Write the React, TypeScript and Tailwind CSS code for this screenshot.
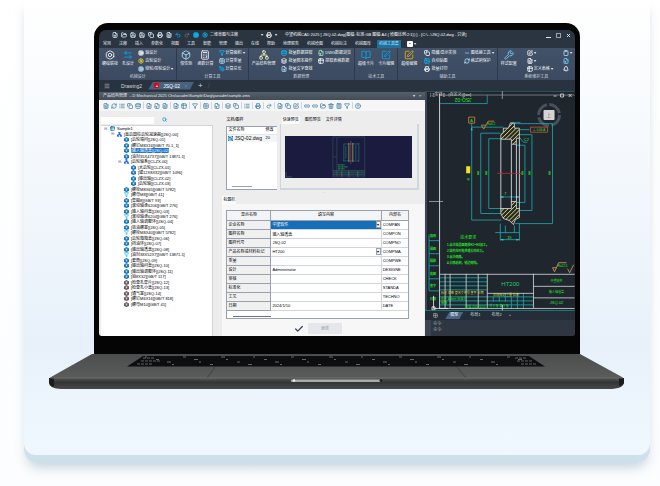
import type { ReactNode } from 'react';
import clsx from 'clsx';
import {
  ArrowLeftRight,
  Bell,
  Bolt,
  BookOpen,
  Box,
  Calculator,
  Check,
  Clipboard,
  Cog,
  Copy,
  Database,
  FileInput,
  FilePlus,
  FileSearch,
  FileText,
  Filter,
  FolderOpen,
  Grid2x2,
  HelpCircle,
  Image,
  Layers,
  Link2,
  List,
  Menu,
  Minus,
  Network,
  PenTool,
  Printer,
  Redo2,
  RefreshCw,
  Save,
  Search,
  Settings,
  SquarePen,
  Table2,
  Trash2,
  Undo2,
  Wrench,
  X,
  type LucideIcon,
} from 'lucide-react';

const menuItems = [
  '常用', '注释', '插入', '参数化', '视图', '工具', '智能', '管理', '输出', '在线', '帮助',
  '地理服务', '机械绘图', '机械标注', '机械图库', '机械工具集',
];

type Tool = { label: string; icon: LucideIcon; color?: string; more?: boolean };
type Group = { title: string; big: Tool[]; small: Tool[][] };

const groups: Group[] = [
  {
    title: '机械设计',
    big: [
      { label: '螺纹联接', icon: Bolt },
      { label: '孔设计', icon: ArrowLeftRight, color: 'text-sky-500' },
    ],
    small: [
      [
        { label: '轴设计', icon: Cog },
        { label: '齿轮设计', icon: Settings, color: 'text-yellow-300' },
        { label: '链轮/带轮设计', icon: Cog, color: 'text-sky-200', more: true },
      ],
    ],
  },
  {
    title: '计算工具',
    big: [
      { label: '惯性矩', icon: Box, color: 'text-sky-200' },
      { label: '函数计算', icon: Calculator },
    ],
    small: [
      [
        { label: '计算面积', icon: Filter, color: 'text-sky-400', more: true },
        { label: '计算重量', icon: Grid2x2, color: 'text-sky-200' },
        { label: '计算总长', icon: PenTool, color: 'text-sky-500' },
      ],
    ],
  },
  {
    title: '数据管理',
    big: [{ label: '产品结构管理', icon: Network, color: 'text-yellow-100' }],
    small: [
      [
        { label: '批量数据提取', icon: Database, color: 'text-sky-400' },
        { label: '批量脚本操作', icon: Layers },
        { label: '批量文字查找', icon: FileSearch, color: 'text-sky-200' },
      ],
      [
        { label: 'DWG数据浏览', icon: FileInput, color: 'text-emerald-200' },
        { label: '提取表格数据', icon: Table2 },
      ],
    ],
  },
  {
    title: '技术工具',
    big: [
      { label: '超级卡片', icon: BookOpen, color: 'text-sky-500' },
      { label: '卡片编辑', icon: SquarePen, color: 'text-sky-500' },
    ],
    small: [],
  },
  {
    title: '辅助工具',
    big: [{ label: '超级编辑', icon: SquarePen, color: 'text-yellow-500' }],
    small: [
      [
        { label: '隐藏/显示实体', icon: Copy },
        { label: '自动贴图', icon: Image, color: 'text-sky-400' },
        { label: '批量打印', icon: Printer },
      ],
      [
        { label: '图纸换工具', icon: Minus, color: 'text-sky-300', more: true },
        { label: '格式刷保护', icon: RefreshCw, color: 'text-sky-200' },
      ],
    ],
  },
  {
    title: '系统维护工具',
    big: [{ label: '样式配置', icon: Wrench, color: 'text-sky-300' }],
    small: [
      [
        { label: '', icon: SquarePen, more: true },
        { label: '', icon: FileText, more: true },
        { label: '定义表格', icon: Table2, more: true },
      ],
      [
        { label: '', icon: Clipboard, color: 'text-sky-200', more: true },
        { label: '', icon: FileInput, color: 'text-sky-300' },
        { label: '', icon: Bell },
      ],
    ],
  },
];

const quickIcons = [FilePlus, FolderOpen, Save, Save, Copy, Printer, FileText];

const toolbar: (LucideIcon | null)[] = [
  FileText, RefreshCw, List, Copy, Database, null, FilePlus, FileInput, FileText, null, FileSearch,
  Table2, null, Filter, null, Grid2x2, null, FileInput, null, Layers, Copy, null, List, null, Printer,
  null, Redo2, null, FileSearch, Copy, SquarePen, null, Link2, Link2, FolderOpen, Trash2, Calculator,
  Filter, null, HelpCircle,
];

// level, kind, text. a: assembly, p: part, f: fastener, m: missing part
type Kind = 'root' | 'a' | 'p' | 'f' | 'm';
const tree: [number, Kind, string][] = [
  [0, 'root', 'Sample1'],
  [1, 'a', '[直齿圆柱齿轮减速器][JSQ-00]'],
  [2, 'p', '[齿轮端闷][JSQ-01]'],
  [2, 'p', '[螺钉M8X16][GB/T 70.1_1]'],
  [2, 'p', '[输入轴透盖][JSQ-02]'],
  [2, 'p', '[油封35X47X7][GB/T 13871.1]'],
  [2, 'a', '[齿轮轴系][CLZX-00]'],
  [3, 'p', '[大齿轮][CLZX-01]'],
  [3, 'p', '[键12X8X32][GB/T 1096]'],
  [3, 'p', '[输出轴][CLZX-02]'],
  [3, 'p', '[齿轮轴][CLZX-03]'],
  [2, 'p', '[螺栓M8X65][GB/T 5782]'],
  [2, 'f', '[螺母M8][GB/T 41]'],
  [2, 'p', '[垫圈8][GB/T 93]'],
  [2, 'p', '[滚动轴承6206][GB/T 276]'],
  [2, 'p', '[输入轴闷盖][JSQ-03]'],
  [2, 'f', '[滚动轴承6204][GB/T 276]'],
  [2, 'p', '[输入轴调整环][JSQ-04]'],
  [2, 'p', '[放油螺塞][JSQ-05]'],
  [2, 'f', '[螺栓M8X40][GB/T 5782]'],
  [2, 'p', '[齿轮箱箱盖][JSQ-06]'],
  [2, 'p', '[挡油环][JSQ-07]'],
  [2, 'p', '[输出轴透盖][JSQ-08]'],
  [2, 'f', '[油封38X52X7][GB/T 13871.1]'],
  [2, 'p', '[套筒][JSQ-09]'],
  [2, 'p', '[输出轴闷盖][JSQ-10]'],
  [2, 'p', '[输出轴调整环][JSQ-11]'],
  [2, 'p', '[销8X32][GB/T 117]'],
  [2, 'm', '[检查孔垫片][JSQ-12]'],
  [2, 'm', '[检查孔小盖][JSQ-13]'],
  [2, 'm', '[通气塞][JSQ-14]'],
  [2, 'm', '[螺钉M6X16][GB/T 818]'],
  [2, 'm', '[螺母M10][GB/T 41]'],
];
const indents = ['pl-[2px]', 'pl-[9px]', 'pl-[16px]', 'pl-[23px]'];

const props: { name: string; value: string; key: string; list?: boolean }[] = [
  { name: '企业名称', value: '中望软件', key: 'COMPAN', list: true },
  { name: '图样名称', value: '输入轴透盖', key: 'COMPON' },
  { name: '图样代号', value: 'JSQ-02', key: 'COMPNO' },
  { name: '产品名称或材料标记', value: 'HT200', key: 'COMPMA', list: true },
  { name: '重量', value: '', key: 'COMPWE' },
  { name: '设计', value: 'Administrator', key: 'DESIGNE' },
  { name: '审核', value: '', key: 'CHECK' },
  { name: '标准化', value: '', key: 'STANDA' },
  { name: '工艺', value: '', key: 'TECHNO' },
  { name: '日期', value: '2024/1/10', key: 'DATE' },
];

function TitleBar() {
  return (
    <header className="flex h-[10px] items-center pl-[13px] pr-1 text-gray-100">
      <div className="flex items-center gap-[3px] text-sky-100">
        {quickIcons.map((Icon, i) => (
          <Icon key={i} className="size-[6px]" strokeWidth={3} />
        ))}
        <Undo2 className="size-[6px] text-sky-500" strokeWidth={3} />
        <Redo2 className="size-[6px] text-slate-500" strokeWidth={3} />
        <Cog className="size-[6px] text-sky-400" strokeWidth={4} />
        <Settings className="size-[6px] text-sky-400" strokeWidth={3} />
      </div>
      <span className="ml-[2px] whitespace-nowrap">二维草图与注释</span>
      <span className="ml-[23px] flex items-center gap-[3px]">
        ▾ <Printer className="size-[6px]" strokeWidth={3} /> ▾
      </span>
      <h1 className="ml-2 flex-1 whitespace-nowrap text-gray-50">
        中望机械CAD 2025 [ JSQ-02.dwg(图幅: 标准:GB 图幅:A4 ( 绘图比例:2:1)) ] - [C:\...\JSQ-02.dwg - 只读]
      </h1>
      <div className="flex items-center gap-[5px]">
        <button type="button" aria-label="最小化" className="mt-1 h-px w-[5px] bg-gray-200" />
        <button type="button" aria-label="最大化" className="size-[5px] border border-gray-400" />
        <button type="button" aria-label="关闭">
          <X className="size-[5px]" strokeWidth={4} />
        </button>
      </div>
    </header>
  );
}

function MenuBar() {
  return (
    <nav className="flex h-2 items-center gap-2 pl-1 text-gray-200">
      {menuItems.map((item, i) => (
        <button
          key={item}
          type="button"
          className={clsx(
            'whitespace-nowrap',
            i === menuItems.length - 1 && '-mx-[2px] h-2 bg-[#216f9b] px-[2px] text-sky-200',
          )}
        >
          {item}
        </button>
      ))}
      <button type="button" aria-label="更多" className="flex items-center gap-[1px]">
        <span className="flex size-[6px] items-center justify-center rounded-[1px] bg-white text-[#2b3642]">▪</span>▾
      </button>
    </nav>
  );
}

function Ribbon() {
  return (
    <div className="grid h-8 grid-cols-[78fr_71fr_106fr_43fr_99fr_77fr] bg-gradient-to-b from-[#425268] to-[#3b4a60] text-gray-100">
      {groups.map((group) => (
        <section key={group.title} className="flex min-w-0 flex-col border-r border-[#2d3a4b] last:border-r-0">
          <div className="flex flex-1 items-start justify-between px-[3px] pt-px">
            {group.big.map(({ label, icon: Icon, color }) => (
              <button key={label} type="button" className="flex flex-col items-center whitespace-nowrap pt-px">
                <Icon className={clsx('size-[10px]', color ?? 'text-white')} />
                <span className="leading-[7px]">{label}</span>
              </button>
            ))}
            {group.small.map((column, i) => (
              <div key={i} className="flex flex-col">
                {column.map(({ label, icon: Icon, color, more }, j) => (
                  <button key={j} type="button" aria-label={label || '工具'} className="flex h-2 items-center gap-[1px] whitespace-nowrap">
                    <Icon className={clsx('size-[6px] shrink-0', color ?? 'text-white')} strokeWidth={3} />
                    {label}
                    {more && <span>▾</span>}
                  </button>
                ))}
              </div>
            ))}
          </div>
          <h2 className="text-center leading-[6px] text-gray-300">{group.title}</h2>
        </section>
      ))}
    </div>
  );
}

function DocTabs() {
  return (
    <nav className="flex h-[11px] items-center bg-[#29333f] pl-[5px] text-gray-300">
      <button type="button" aria-label="菜单">
        <Menu className="size-[6px]" strokeWidth={2} />
      </button>
      <button type="button" className="ml-[11px] text-[5px]">Drawing2</button>
      <button
        type="button"
        className="ml-[6px] flex h-2 items-center gap-1 bg-[#47617f] px-[6px] text-[5px] text-white [clip-path:polygon(5px_0,100%_0,calc(100%-4px)_100%,0_100%)]"
      >
        <span className="flex size-[5px] items-center justify-center rounded-[1px] bg-red-600 text-[4px] leading-[4px]">▴</span>
        JSQ-02
        <X className="size-[4px] text-gray-400" />
      </button>
      <button type="button" aria-label="新建" className="ml-1 text-[8px] leading-[8px]">+</button>
      <span className="ml-[5px] text-[7px] text-slate-600">/</span>
    </nav>
  );
}

function TreeIcon({ kind }: { kind: Kind }) {
  if (kind === 'root') return <Table2 className="size-[5px] text-sky-700" strokeWidth={3} />;
  if (kind === 'a') return <Network className="size-[5px] text-blue-600" strokeWidth={4} />;
  if (kind === 'f') return <Filter className="size-[5px] text-sky-500" strokeWidth={3} />;
  return (
    <svg viewBox="0 0 10 10" className={clsx('size-[5px]', kind === 'p' ? 'text-[#1976b8]' : 'text-[#6b5a5c]')}>
      <path d="M5 0 10 3v5L5 10 0 8V3z" fill="currentColor" />
      <path d="M3 4h4M5 4v3" stroke="#d9f0ff" strokeWidth="1.5" />
    </svg>
  );
}

function StructureTree() {
  return (
    <div className="flex flex-col pl-[2px] pt-[6px]">
      <div className="flex h-2 items-start">
        <input aria-label="搜索" className="h-[7px] w-[53px] bg-white px-[2px] outline-none" />
        <button type="button" aria-label="查找" className="ml-2">
          <Search className="size-[5px] text-sky-600" strokeWidth={3} />
        </button>
      </div>
      <ul className="flex flex-1 flex-col border-r border-t border-gray-300 bg-white pb-[29px]">
        {tree.map(([level, kind, text], i) => (
          <li key={i} className={clsx('flex min-h-0 flex-1 items-center gap-[2px] whitespace-nowrap', indents[level])}>
            <span className="flex w-[5px] justify-center text-gray-500">{(kind === 'root' || kind === 'a') && '⊟'}</span>
            <span className="w-[5px] shrink-0"><TreeIcon kind={kind} /></span>
            <span className={clsx('leading-[5px]', i === 4 && 'bg-[#1c74cf] text-white')}>{text}</span>
          </li>
        ))}
      </ul>
    </div>
  );
}

function Preview() {
  return (
    <svg viewBox="0 0 128 42" className="w-full bg-[#1b1b3f]" fill="none" strokeWidth=".5">
      <path d="M48 1h32v40H48zM52 1v40M48 21h4" stroke="#39605c" />
      <path d="M59 8v17M61 10v13M74 7v19M71 9v15M59 8h15M58 25h16" stroke="#279b78" />
      <path d="M64 7v19M68 7v19" stroke="#a8a65c" strokeWidth=".8" />
      <path d="M66 5v23" stroke="#c55" />
      <path d="M53 29h7M53 31h10M53 33h7" stroke="#26d54a" strokeDasharray="1 .4" strokeWidth=".8" />
      <path d="M48 35h32M48 37h32M48 39h32M57 35v6M64 35v6M73 35v6" stroke="#4fa67c" />
      <path d="M1 36v5h6" stroke="#487" />
    </svg>
  );
}

function FilePane() {
  return (
    <div className="grid grid-cols-[50fr_139fr] gap-[3px] pl-[5px] pr-[6px]">
      <div>
        <h3 className="h-[10px] leading-[7px]">文档/图样</h3>
        <div className="flex h-[64px] flex-col justify-between border border-r-0 border-gray-400 bg-white">
          <table className="w-full table-fixed border-collapse text-left">
            <thead>
              <tr className="h-[7px] border-b border-gray-200">
                <th className="w-[38px] p-0 pl-px font-normal">文件名称</th>
                <th className="whitespace-nowrap p-0 font-normal">修改</th>
              </tr>
            </thead>
            <tbody>
              <tr className="h-2 bg-gray-100">
                <td className="whitespace-nowrap p-0 pl-px text-[5px]">
                  <span className="flex items-center gap-[1px]">
                    <FileInput className="size-[5px] bg-sky-700 text-white" strokeWidth={3} />
                    JSQ-02.dwg
                  </span>
                </td>
                <td className="p-0">20</td>
              </tr>
            </tbody>
          </table>
          <span className="mb-[2px] ml-[5px] h-px w-5 bg-gray-400" />
        </div>
      </div>
      <div>
        <div role="tablist" className="flex h-2 gap-[5px] pl-[2px] leading-[8px]">
          <button type="button" role="tab" className="bg-gray-50 px-px">快速预览</button>
          <button type="button" role="tab">图形预览</button>
          <button type="button" role="tab">文件详情</button>
        </div>
        <div className="h-[66px] border-b-2 border-l border-r-2 border-b-gray-300 border-l-gray-300 border-r-gray-300 pl-1 pr-[5px] pt-3">
          <Preview />
        </div>
      </div>
    </div>
  );
}

function TitleBlockPane() {
  return (
    <div className="flex-1 px-px">
      <button type="button" className="block h-2 bg-gray-50 px-px leading-[8px]">标题栏</button>
      <div className="bg-[#f7f7f7] pb-[2px] pl-1 pr-[15px] pt-[6px]">
        <div className="h-[109px] overflow-hidden border border-gray-400 bg-white">
          <table className="w-full table-fixed border-collapse">
            <thead>
              <tr className="h-[9px] bg-gray-100">
                <th className="w-[24%] border-b border-r border-gray-400 font-normal">显示名称</th>
                <th className="border-b border-r border-gray-400 font-normal">填写内容</th>
                <th className="w-[15%] whitespace-nowrap border-b border-gray-400 font-normal">内部名</th>
              </tr>
            </thead>
            <tbody>
              {props.map((row, i) => (
                <tr key={row.key} className="h-[9px]">
                  <th className="whitespace-nowrap border-b border-r border-gray-400 bg-[#f0f0f0] p-0 pl-px text-left font-normal">
                    {row.name}
                  </th>
                  <td className={clsx('border-b border-r border-gray-300 p-0', i === 0 && 'bg-[#146eb9] text-white')}>
                    {row.list ? (
                      <span className="flex items-center">
                        <select aria-label={row.name} className="h-2 flex-1 appearance-none bg-transparent pl-px">
                          <option>{row.value}</option>
                        </select>
                        <span className="h-[7px] w-[5px] border border-gray-400 bg-gray-100 text-center leading-[5px] text-black">▾</span>
                      </span>
                    ) : (
                      <input aria-label={row.name} defaultValue={row.value} className="block h-2 w-full pl-px outline-none" />
                    )}
                  </td>
                  <td className="whitespace-nowrap border-b border-gray-300 p-0 pl-px">{row.key}</td>
                </tr>
              ))}
            </tbody>
          </table>
          <div className="ml-[6px] mt-[5px] h-px w-[38px] bg-gray-500" />
        </div>
        <button type="button" className="mx-auto mt-1 flex h-[11px] w-[48px] items-center bg-gray-200 text-gray-400">
          <span className="flex h-full w-[14px] items-center bg-[#f7f7f7]">
            <Check className="size-[10px] text-gray-700" strokeWidth={3} />
          </span>
          <span className="flex-1">更新</span>
        </button>
      </div>
    </div>
  );
}

function StructurePanel() {
  return (
    <section className="flex min-w-0 flex-col pt-px">
      <header className="flex h-2 items-center justify-between bg-gradient-to-b from-[#53606b] to-[#424c57] px-1 text-gray-200">
        <span className="whitespace-nowrap">
          产品结构管理&nbsp; ...D Mechanical 2025 Chs\acadm\Sample\Dwg\yanadm\sample.zms
        </span>
        <span className="flex gap-1">▾ <span>×</span></span>
      </header>
      <div className="flex h-[11px] items-center gap-[2px] bg-[#f6f6f6] pl-1 text-[#4785a9]">
        {toolbar.map((Icon, i) =>
          Icon ? (
            <button key={i} type="button" aria-label="工具">
              <Icon className="size-[6px]" strokeWidth={3} />
            </button>
          ) : (
            <span key={i} className="h-[7px] w-px bg-gray-300" />
          ),
        )}
      </div>
      <div className="grid flex-1 grid-cols-[114fr_211fr] bg-[#ededee] text-black">
        <StructureTree />
        <div className="flex min-w-0 flex-col pl-2 pt-[5px]">
          <FilePane />
          <div className="h-[6px] text-center leading-[6px] text-gray-400">···</div>
          <TitleBlockPane />
        </div>
      </div>
    </section>
  );
}

function Label({ x, y, size = 4, fill = '#23e623', children }: { x: number; y: number; size?: number; fill?: string; children: ReactNode }) {
  return (
    <text x={x} y={y} fontSize={size} fill={fill} textAnchor="middle">
      {children}
    </text>
  );
}

function Drawing() {
  return (
    <svg viewBox="0 0 149 219" className="w-full bg-[#20262e]" fill="none" strokeWidth=".8">
      <defs>
        <pattern id="hatch" width="3" height="3" patternUnits="userSpaceOnUse" patternTransform="rotate(45)">
          <path d="M0 0v3" stroke="#d8cf5c" strokeWidth="1.6" />
        </pattern>
      </defs>
      <path d="M0 0h149" stroke="#3b8f8f" />
      <path d="M0 0v219" stroke="#3d4854" strokeWidth="4" />
      <path d="M14 4h135" stroke="#7f8b93" />
      <text x="5" y="5" fontSize="4" fill="#ddd">[-][实体][...(自定义)][wx]</text>
      <path d="M77 0v8M4 110h14" stroke="#aaa" />
      <path d="M14.500 3v214" stroke="#c8ced3" strokeWidth="1" />
      <path d="M15 12.500h47V4" stroke="#1aa5a0" />
      <g transform="rotate(180 38 8)"><Label x={38} y={9} size={5}>JSQ-02</Label></g>
      <path d="M128 5h3M143 3l3 3m0-3-3 3M135 3h3v3h-3z" stroke="#ddd" />

      {/* view cube */}
      <circle cx="123.500" cy="24" r="10.500" stroke="#4a515b" strokeWidth="3" strokeDasharray="14 2.500" />
      <rect x="118" y="19" width="11" height="10" rx="1" fill="#d2d4d7" />
      <Label x={123.5} y={26} size={5} fill="#c44">上</Label>

      {/* dimensions */}
      <g stroke="#16aeb4">
        <path d="M46.500 32v96.500H76M46.500 36H78M55.500 42v80H76M55.500 42H75M63.500 47.500v69.500H76M63.500 47.500H76" />
        <path d="M91 54h8.500v57H91M94 43.500h12.500V119H94M89 32.500h38V132H90M85 31.500h10" />
        <path d="M75 132v17M94 132v17M75 148h19M70 141h24M75 105.500h19M80 134v7M89 134v7M94 46l4 5h4" />
        <path d="M4 149h10M4 162h10M4 174h10M4 187h10M4 199h10M4 143v56" />
      </g>
      <path d="m75 105.500 3-1v2zM94 105.500l-3-1v2zM75 148l3-1v2zM94 148l-3-1v2zM46.500 36l-1 3h2z" fill="#22d3d8" />

      {/* section of the cover */}
      <path d="M75.500 48v70M86 53v58M91 53v57M94 47v71" stroke="#eee" />
      <path d="M75.500 48v-4.500L78 41v-4h5l2-5h4v5h5v10h-3v6h-5v-5z" fill="url(#hatch)" stroke="#ddd" />
      <path d="M75.500 117H86v-7h5v7h3v9l-4 2-2 5-4-4-6-2-2.500-5z" fill="url(#hatch)" stroke="#ddd" />
      <path d="M72 82h24" stroke="#d02430" />

      <path d="M43.500 26h6v6h-6z" stroke="#d28a35" />
      <path d="M105 36h17v5h-17z" stroke="#d05638" />
      <path d="M94 38.500h10" stroke="#16aeb4" />
      <Label x={46.5} y={31}>A</Label>
      <Label x={113.500} y={40} size={3}>⊥ 0.04 A</Label>
      <path d="m56 34 2.500 4L63 30h6M56 34h5" stroke="#d28a35" />
      <Label x={66} y={34} size={3}>Ra3.2</Label>
      <Label x={101} y={50}>C2</Label>
      <path d="M41 75h4v7h-4z" fill="#f3e51d" />
      <Label x={43} y={89}>φ</Label>
      {[53, 61, 97, 104, 124].map((x) => (
        <path key={x} d={`M${x} 80v4`} stroke="#1bd31b" strokeWidth="2" strokeDasharray="1.500 .5" />
      ))}
      <Label x={84} y={147}>19</Label>
      <Label x={80} y={104}>7</Label>

      <Label x={43} y={147}>技术要求</Label>
      <g fontSize="3" fill="#23e623" stroke="#23e623" strokeWidth=".1">
        <text x="22" y="154">1.未注铸造圆角按R2~R3加工。</text>
        <text x="22" y="160">2.铸件应时效处理去内应力。</text>
        <text x="22" y="166">3.未注倒角。</text>
        <text x="22" y="172">4.去除毛刺，锐边倒钝。</text>
        <text x="5" y="145">借用</text>
        <text x="5" y="158">描图</text>
        <text x="5" y="170">描校</text>
        <text x="5" y="183">底图</text>
        <text x="5" y="195">签字</text>
        <text x="5" y="208">日期</text>
      </g>
      <path d="m127 176 2 4 4-9h8M127 176h4m11 1 2 4 4-8" stroke="#d2a066" />
      <Label x={137} y={175} size={3}>Ra12.5</Label>

      {/* title block */}
      <path d="M15 186h47M15 190h47M15 194h47M15 198h47M15 205h93M15 209h93M15 213h93M68 205v5M74 205v5M80 201v9M86 205v12M92 201v16M98 201v16" stroke="#16aeb4" />
      <path d="M15 182.500h134M15 216.500h134M62 182v34M108 182v34M20 182v34M25 182v34M41 182v34M53 182v34M62 201.500h46M108 194.500h41M108 206h41" stroke="#d7dcdf" />
      <Label x={85} y={194} size={6} fill="#28c96c">HT200</Label>
      <text x="16" y="202" fontSize="3" fill="#d9df34">标记 处数 更改文件号 签字 日期</text>
      <text x="16" y="208" fontSize="3" fill="#23e623">设计 Admin 标准化</text>
      <text x="16" y="212" fontSize="3" fill="#23e623">审核</text>
      <text x="40" y="216" fontSize="3" fill="#23e623">批准 2024/1/10</text>
      <text x="68" y="204" fontSize="3" fill="#d9df34">阶段标记 重量 比例</text>
      <text x="64" y="215" fontSize="3" fill="#23e623">共 1 张 第 1 张</text>
      <Label x={131} y={190} size={3}>中望软件</Label>
      <Label x={131} y={201} size={3}>输入轴透盖</Label>
      <Label x={131} y={212}>JSQ-02</Label>
      <path d="M77 213v6M8.500 204v12.500H23" stroke="#eee" />
      <path d="M7 215h3v3H7z" stroke="#fff" />
      <path d="M0 218.500h149" stroke="#16908f" />
    </svg>
  );
}

function CadPane() {
  return (
    <section className="flex min-w-0 flex-col bg-[#2e3741] text-gray-300">
      <Drawing />
      <div className="flex h-[9px] items-center gap-[7px] bg-[#252e38] pl-2">
        <Grid2x2 className="size-[5px]" />
        <button type="button" className="h-[7px] bg-[#4a6583] px-[5px] text-white [clip-path:polygon(4px_0,100%_0,calc(100%-4px)_100%,0_100%)]">模型</button>
        <button type="button">布局1</button>
        <button type="button" className="ml-1">布局2</button>
        <button type="button" aria-label="新建布局">+</button>
      </div>
      <label className="flex flex-1 flex-col border-l-[6px] border-[#3b4651] pl-[2px] pt-px leading-[6px] text-gray-400">
        <span>命令:</span>
        <span className="flex">
          命令:
          <input aria-label="命令" className="w-0 flex-1 bg-transparent outline-none" />
        </span>
      </label>
    </section>
  );
}

const keys = Array.from({ length: 42 }, (_, i) => i);

function Keyboard() {
  return (
    <svg viewBox="0 0 576 36" className="block w-full">
      <defs>
        <linearGradient id="deck" x1="0" x2="0" y1="0" y2="1">
          <stop offset="0" stopColor="#4c4e4e" />
          <stop offset="1" stopColor="#5c5d5c" />
        </linearGradient>
        <linearGradient id="front" x1="0" x2="0" y1="0" y2="1">
          <stop offset="0" stopColor="#555655" />
          <stop offset=".4" stopColor="#333534" />
          <stop offset="1" stopColor="#484a49" />
        </linearGradient>
      </defs>
      <path d="M43 0h488l42 23q2 1 2 4H0q0-3 2-4z" fill="url(#deck)" />
      <path d="M0 24h575v4q0 7-15 7H12Q0 35 0 28z" fill="url(#front)" />
      <path d="M0 24h5v9q-5-1-5-5zM575 24h-5v8q5-1 5-4z" fill="#1b1d1d" />
      <path d="M94 2h386l16 10.500H78z" fill="#0d0e0f" />
      {keys.map((i) => (
        <path key={i} d={`M${96 + i * 9 + (i % 3) * 2} ${3 + (i % 4) * 2.5}h${2 + (i % 3)}`} stroke="#8c8e8e" strokeWidth=".7" />
      ))}
      <path d="M94 4h12M92 7h20M88 10h15M466 4h12M468 7h16M472 10h16" stroke="#77797b" strokeWidth=".8" strokeDasharray="3 1" />
      <path d="m166 13-8 11M408 13l9 11" stroke="#343636" strokeWidth=".7" />
      <path d="M1 24h573" stroke="#737472" strokeWidth=".7" />
      <rect x="242" y="25.500" width="90" height="2.500" rx="1" fill="#aaa" />
      <circle cx="245" cy="26.500" r="1.200" fill="#eee" />
      <circle cx="332" cy="26.500" r="1.500" fill="#222" />
    </svg>
  );
}

export default function App() {
  return (
    <main className="min-h-screen bg-gradient-to-b from-white to-[#fbfdfe] pl-6 pr-[10px] font-['Liberation_Sans','Noto_Sans_CJK_SC',sans-serif] text-[4px] leading-[6px]">
      <div className="rounded-b-[14px] bg-gradient-to-b from-transparent from-60% to-[#cddfea] pb-2 shadow-[0_7px_12px_-3px_rgba(115,145,165,0.4)]">
        <div className="rounded-b-[12px] bg-gradient-to-b from-white via-[#e8f1fa] via-75% to-[#f0f8ff] pb-[65px] pt-[23px]">
          <div className="mx-[70px] rounded-t-[14px] bg-[#050505] px-[5px] pb-[18px] pt-[7px]">
            <div className="overflow-hidden rounded-b-[3px] rounded-t-[7px] bg-[#2b3541]">
              <TitleBar />
              <MenuBar />
              <Ribbon />
              <DocTabs />
              <div className="grid grid-cols-[325fr_149fr]">
                <StructurePanel />
                <CadPane />
              </div>
            </div>
          </div>
          <div className="mx-[25px]">
            <Keyboard />
          </div>
        </div>
      </div>
    </main>
  );
}
